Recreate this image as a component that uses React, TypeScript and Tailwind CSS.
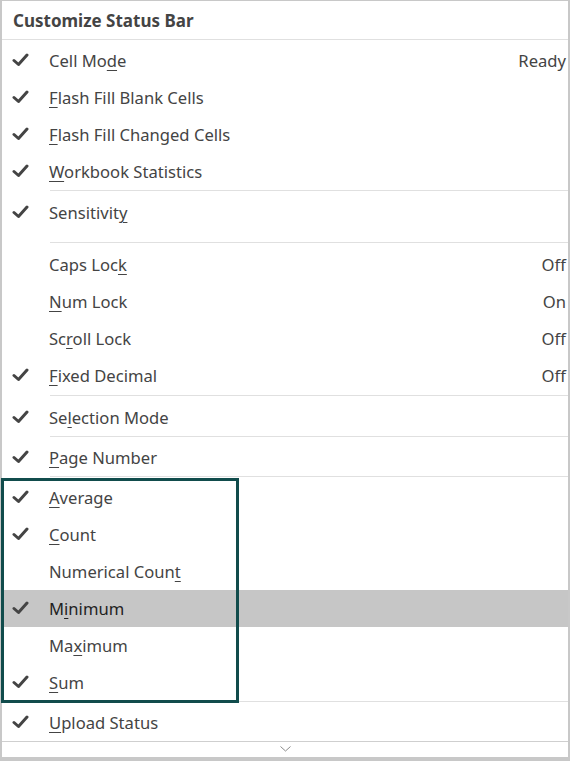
type Item = {
  label: string // '&' marks the access key that gets underlined
  checked?: boolean
  value?: string
  active?: boolean
}

type Group = {
  items: Item[]
  pad: string
  boxed?: boolean
}

const GROUPS: Group[] = [
  {
    pad: 'pt-[2px]',
    items: [
      { label: 'Cell Mo&de', checked: true, value: 'Ready' },
      { label: '&Flash Fill Blank Cells', checked: true },
      { label: '&Flash Fill Changed Cells', checked: true },
      { label: '&Workbook Statistics', checked: true },
    ],
  },
  {
    pad: 'pt-[3px] pb-[11px]',
    items: [{ label: 'Sensitivit&y', checked: true }],
  },
  {
    pad: 'pt-[3px] pb-[1px]',
    items: [
      { label: 'Caps Loc&k', value: 'Off' },
      { label: '&Num Lock', value: 'On' },
      { label: 'Sc&roll Lock', value: 'Off' },
      { label: '&Fixed Decimal', checked: true, value: 'Off' },
    ],
  },
  {
    pad: 'pt-[3px]',
    items: [{ label: 'Se&lection Mode', checked: true }],
  },
  {
    pad: 'pt-[2px]',
    items: [{ label: '&Page Number', checked: true }],
  },
  {
    pad: 'pt-[2px]',
    boxed: true,
    items: [
      { label: '&Average', checked: true },
      { label: '&Count', checked: true },
      { label: 'Numerical Coun&t' },
      { label: 'M&inimum', checked: true, active: true },
      { label: 'Ma&ximum' },
      { label: '&Sum', checked: true },
    ],
  },
  {
    pad: 'pt-[2px]',
    items: [{ label: '&Upload Status', checked: true }],
  },
]

function Label({ text }: { text: string }) {
  const i = text.indexOf('&')
  if (i < 0) return <>{text}</>
  return (
    <>
      {text.slice(0, i)}
      <u className="underline decoration-1 underline-offset-[3px]">{text[i + 1]}</u>
      {text.slice(i + 2)}
    </>
  )
}

function Check() {
  return (
    <svg width="17" height="14" viewBox="0 0 17 14" className="-mt-[2px]">
      <polyline
        points="2,7.5 6.5,11.5 15,2"
        fill="none"
        stroke="#444444"
        strokeWidth="3"
        strokeLinecap="round"
        strokeLinejoin="round"
      />
    </svg>
  )
}

function Row({ item }: { item: Item }) {
  return (
    <div
      className={`flex h-[37px] items-center ${
        item.active ? 'bg-[#c6c6c6] text-[#1f1f1f]' : 'text-[#444444]'
      }`}
    >
      <div className="flex w-[47px] shrink-0 pl-[10px]">{item.checked && <Check />}</div>
      <div className="flex-1 whitespace-nowrap pt-[2px]">
        <Label text={item.label} />
      </div>
      {item.value && <div className="pr-[2px] pt-[2px] whitespace-nowrap">{item.value}</div>}
    </div>
  )
}

export default function App() {
  return (
    <div
      className="h-[761px] w-[570px] bg-white"
      style={{ fontFamily: '"Segoe UI", "Noto Sans", "Open Sans", sans-serif' }}
    >
      <div className="relative flex h-full flex-col border-t border-r-2 border-b-4 border-l-2 border-[#c8c8c8] text-[16.6px]">
        <div className="flex h-[38px] items-center pl-[11px] pt-[2px] text-[17px] font-bold text-[#444444]">
          Customize Status Bar
        </div>
        <div className="h-px bg-[#e0e0e0]" />

        {GROUPS.map((g, gi) => (
          <div key={gi}>
            {gi > 0 && <div className="ml-[48px] h-px bg-[#e0e0e0]" />}
            <div className={`relative ${g.pad}`}>
              {g.items.map((it, ii) => (
                <Row key={ii} item={it} />
              ))}
              {g.boxed && (
                <div className="pointer-events-none absolute -left-[1px] top-[1px] z-10 h-[225px] w-[238px] border-[3px] border-[#114c4c]" />
              )}
            </div>
          </div>
        ))}

        <div className="h-px bg-[#cfcfcf]" />
        <div className="flex flex-1 items-start justify-center pt-[4px]">
          <svg width="11" height="6" viewBox="0 0 11 6">
            <polyline points="0.5,0.5 5.5,5 10.5,0.5" fill="none" stroke="#8a8a8a" strokeWidth="1" />
          </svg>
        </div>
      </div>
    </div>
  )
}
